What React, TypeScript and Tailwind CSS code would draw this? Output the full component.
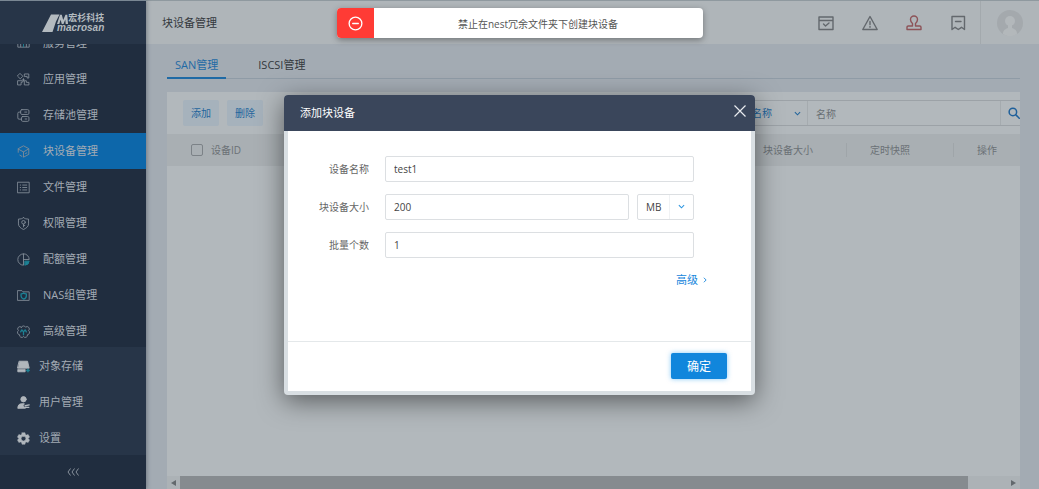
import type { ReactNode } from "react";

type IconProps = { children: ReactNode; className?: string };

function Icon({ children, className = "size-[13px]" }: IconProps) {
  return (
    <svg
      viewBox="0 0 16 16"
      className={className}
      fill="none"
      stroke="currentColor"
      strokeWidth="1.1"
      strokeLinecap="round"
      strokeLinejoin="round"
      aria-hidden="true"
    >
      {children}
    </svg>
  );
}

const teal = "#1c8194";

const menu: { label: string; icon: ReactNode; active?: boolean }[] = [
  {
    label: "服务管理",
    icon: (
      <>
        <path d="M1 3v9.500h14V3M4.500 7v5M11.500 7v5" />
        <path d="M8 6v6" stroke={teal} />
      </>
    ),
  },
  {
    label: "应用管理",
    icon: (
      <>
        <path d="M4 .8 7.200 4 4 7.200.8 4ZM9.500 1.200h5v5h-2v-2h-3Z" />
        <path d="M1.200 9.500h5.300v2H5v3.200H1.200ZM9.500 9.500h2v2h3.200v3.200H9.500Z" />
        <path d="M8 7v3M6.500 8.500H9" />
      </>
    ),
  },
  {
    label: "存储池管理",
    icon: (
      <>
        <path d="M6 .8h7.200a1.500 1.500 0 0 1 1.500 1.500v2.900a1.500 1.500 0 0 1-1.500 1.500H6a1.500 1.500 0 0 1-1.500-1.500V2.300A1.500 1.500 0 0 1 6 .8ZM7 9.300h6.200a1.500 1.500 0 0 1 1.500 1.500v2.900a1.500 1.500 0 0 1-1.500 1.500H7a1.500 1.500 0 0 1-1.500-1.500v-2.900A1.500 1.500 0 0 1 7 9.300Z" />
        <path d="M4.500 3.800h-2A1.500 1.500 0 0 0 1 5.300V11a1.500 1.500 0 0 0 1.500 1.500h3M9.500 3.800H12M10 12.300h2" />
      </>
    ),
  },
  {
    label: "块设备管理",
    active: true,
    icon: (
      <>
        <path d="M1.500 9V4.500L8 1l6.500 3.500v7L8 15V8.500L1.500 5" />
        <path d="m8 8.500 6-3.500M3.500 12.500 6 14M10.500 10.500l1.500-.8" />
      </>
    ),
  },
  {
    label: "文件管理",
    icon: (
      <path d="M1 1.500h14v13H1ZM4 5h.5M4 8h.5M4 11h.5M7 5h5M7 8h5M7 11h5" />
    ),
  },
  {
    label: "权限管理",
    icon: (
      <>
        <path d="M8 .8c1.500 1.300 3.500 1.800 6.200 1.700v6c0 3-2.200 5-6.200 6.900-4-1.900-6.200-3.900-6.200-6.900v-6C4.500 2.600 6.500 2.100 8 .8Z" />
        <circle cx="8" cy="6.500" r="2.200" />
        <path d="M8 8.700v3.500M8 10.500h1.500" />
      </>
    ),
  },
  {
    label: "配额管理",
    icon: (
      <>
        <path d="M8 1a7 7 0 1 0 0 14V1a7 7 0 0 1 7 7H8" />
        <path d="M10 10h5a5.500 5.500 0 0 1-5 5Z" fill={teal} stroke={teal} />
      </>
    ),
  },
  {
    label: "NAS组管理",
    icon: (
      <>
        <path d="M1 2h5l1.500 1.500H15V14H1Z" />
        <path
          d="M5 6c2 0 3-1 3-1s1 1 3.500 1v2.500C11.500 11 9.500 12 8.200 12.500 7 12 5 11 5 8.500Z"
          stroke={teal}
          strokeWidth="1.600"
        />
      </>
    ),
  },
  {
    label: "高级管理",
    icon: (
      <>
        <path d="M5.500 2.700a2.800 2.800 0 0 1 5 0 2.700 2.700 0 0 1 3.700 4.200 2.800 2.800 0 0 1-1.400 5.100 2.700 2.700 0 0 1-4.800 2.200A2.700 2.700 0 0 1 3.200 12a2.800 2.800 0 0 1-1.400-5.100 2.700 2.700 0 0 1 3.700-4.200Z" />
        <path d="M4.500 8.500 6 6l2 2.500L10 6l1.500 2.500M8 8.500v3.500" stroke={teal} strokeWidth="1.600" />
      </>
    ),
  },
];

const sections: { label: string; icon: ReactNode }[] = [
  {
    label: "对象存储",
    icon: (
      <>
        <path d="M3 1.500h10l2 8.500H1Z" fill="currentColor" />
        <path d="M1 12v2.500h9V12Z" fill="currentColor" />
        <path d="M13.500 11.500v3M12 13h3" stroke={teal} strokeWidth="1.800" />
      </>
    ),
  },
  {
    label: "用户管理",
    icon: (
      <>
        <circle cx="8" cy="4" r="3.300" fill="currentColor" />
        <path d="M1 14.800c0-3.800 2-5.300 5-5.300h3l-1.500 2.500 2.500 2.800Z" fill="currentColor" />
        <path d="m10 12 5-1M10.500 14h4" strokeWidth="1.600" />
      </>
    ),
  },
  {
    label: "设置",
    icon: (
      <path
        d="M6.200.8h3.600l.6 2.200 1.100.7 2.200-.7 1.800 3.200L14 7.800v.6l1.500 1.500-1.800 3.100-2.200-.6-1.100.6-.6 2.200H6.200L5.600 13l-1.100-.6-2.200.6L.5 9.900 2 8.400v-.6L.5 6.200 2.300 3l2.200.7L5.600 3ZM8 5.200a2.900 2.900 0 1 0 0 5.800 2.900 2.900 0 0 0 0-5.800Z"
        fill="currentColor"
        fillRule="evenodd"
        strokeWidth=".5"
      />
    ),
  },
];

const actions: { label: string; color: string; icon: ReactNode }[] = [
  {
    label: "任务",
    color: "text-[#63686d]",
    icon: <path d="M1 2h14v12.500H1ZM1 5.500h14M5.500 9l2 2L11 8" />,
  },
  {
    label: "告警",
    color: "text-[#63686d]",
    icon: <path d="M8 1.500 15.200 14.500H.8ZM8 6.500v3M8 11.500v.8" />,
  },
  {
    label: "授权",
    color: "text-[#8d5358]",
    icon: (
      <path d="M6.500 11V8.500C5.300 7.500 4.500 6 4.500 4.500a3.500 3.500 0 0 1 7 0c0 1.500-.8 3-2 4V11M6.500 11H2.300C1.500 11 1 11.500 1 12.300v2.200h14v-2.200c0-.8-.5-1.300-1.300-1.300H9.500" />
    ),
  },
  {
    label: "日志",
    color: "text-[#63686d]",
    icon: <path d="M2 1.500h12.500v13l-3-2.200-3.200 2.200-3.200-2.200L2 14.500ZM5.500 6.500H11" />,
  },
];

function Chevron({ className }: { className: string }) {
  return (
    <svg viewBox="0 0 8 8" fill="none" stroke="currentColor" strokeWidth="1.200" className={className} aria-hidden="true">
      <path d="m1 2.500 3 3 3-3" />
    </svg>
  );
}

function Sidebar() {
  return (
    <aside className="z-10 flex w-[146px] shrink-0 flex-col bg-[#202d3f] text-[11px] text-[#a3abb4] shadow-[1px_0_4px_rgba(40,50,60,0.4)]">
      <div className="z-10 flex h-11 shrink-0 items-center border-t border-[#7a8793] bg-[#273548] pl-[42px] text-[#b3babf]">
        <svg viewBox="0 0 28 18" className="h-[18px] w-7 shrink-0" fill="currentColor" aria-hidden="true">
          <path d="M0 18 9 .5h8.500L14 7.500 10.500 18Z" />
          <path d="M15 10 18 .8h1.800L21.200 6 23.500.8h1.800L26 10h-2.300l-.4-4.500L21.500 10h-1.700L18.600 5.800 17.300 10Z" />
        </svg>
        <div className="-ml-[13px] flex flex-col items-end">
          <span className="text-[9px] leading-[10px] font-bold">宏杉科技</span>
          <span className="font-['Liberation_Sans'] text-[10px] leading-[9px] font-bold italic">macrosan</span>
        </div>
      </div>
      <nav className="min-h-0 flex-1 overflow-hidden">
        <ul className="-mt-[19px]">
          {menu.map((item) => (
            <li key={item.label}>
              <a
                href="#"
                className={`flex h-9 items-center gap-[13px] pt-px pl-[17px] ${item.active ? "bg-[#0d67aa]" : ""}`}
              >
                <span className="text-[#818b97]">
                  <Icon>{item.icon}</Icon>
                </span>
                {item.label}
              </a>
            </li>
          ))}
        </ul>
      </nav>
      <ul className="shrink-0 bg-[#273548]">
        {sections.map((item) => (
          <li key={item.label}>
            <a href="#" className="flex h-9 items-center gap-[9px] pt-0.5 pl-[17px]">
              <span className="text-[#b0b6bc]">
                <Icon>{item.icon}</Icon>
              </span>
              {item.label}
            </a>
          </li>
        ))}
      </ul>
      <button type="button" aria-label="收起" className="flex h-[34px] shrink-0 items-center justify-center text-[#88919b]">
        <svg viewBox="0 0 12 8" className="h-2 w-3" fill="none" stroke="currentColor" strokeWidth="1" aria-hidden="true">
          <path d="M3.500.5 1 4l2.500 3.500M7.500.5 5 4l2.500 3.500M11.500.5 9 4l2.500 3.500" />
        </svg>
      </button>
    </aside>
  );
}

function Header() {
  return (
    <header className="flex h-11 shrink-0 items-center border-t border-[#8f999f] bg-[#afb5b9] pl-4">
      <h1 className="flex-1 pt-0.5 text-[11px] text-[#33383d]">块设备管理</h1>
      <div className="flex h-full items-center gap-7 border-r border-[#a3a9ad] pr-[14px]">
        {actions.map((a) => (
          <button key={a.label} type="button" aria-label={a.label} className={a.color}>
            <Icon className="size-4 [stroke-width:1.400]">{a.icon}</Icon>
          </button>
        ))}
      </div>
      <button type="button" aria-label="账户" className="px-4">
        <svg viewBox="0 0 26 26" className="size-[26px]" aria-hidden="true">
          <circle cx="13" cy="13" r="13" fill="#a4a9ad" />
          <circle cx="13" cy="11" r="5" fill="#b3b8bb" />
          <path d="M6 24c0-3 1-4.500 5-6v-3h4v3c4 1.500 5 3 5 6a13 13 0 0 1-14 0Z" fill="#b3b8bb" />
        </svg>
      </button>
    </header>
  );
}

const toolbarButton = "h-[26px] w-9 rounded-xs bg-[#a6b2bc] pt-px text-[10px] text-[#23659c]";
const dividedCell = "bg-[linear-gradient(#9fa5a9,#9fa5a9)] bg-[length:1px_14px] bg-left bg-no-repeat pl-6 font-normal";

function VolumePanel() {
  return (
    <section className="flex min-h-0 flex-1 flex-col overflow-hidden bg-[#b2b8bc]">
      <div className="flex h-[42px] shrink-0 items-center gap-2 pl-4">
        <button type="button" className={toolbarButton}>添加</button>
        <button type="button" className={toolbarButton}>删除</button>
        <div className="ml-auto flex h-[26px] items-center border-y border-[#9ca2a7] text-[10px]">
          <div className="relative flex h-full items-center border-r border-[#a5abaf]">
            <select aria-label="搜索条件" className="h-full w-[72px] appearance-none pt-px pl-[17px] text-[#23659c]">
              <option>名称</option>
            </select>
            <Chevron className="pointer-events-none absolute right-1.5 size-[7px] text-[#23659c]" />
          </div>
          <input
            aria-label="搜索"
            placeholder="名称"
            className="h-full w-[193px] border-r border-[#a5abaf] pt-px pl-2 placeholder:text-[#696f74]"
          />
          <button type="button" aria-label="查询" className="pl-[7px] text-[#1f609b]">
            <Icon className="size-3 [stroke-width:2]">
              <circle cx="6.500" cy="6.500" r="5" />
              <path d="m10.500 10.500 4.500 4.500" />
            </Icon>
          </button>
        </div>
      </div>
      <table className="w-full table-fixed text-left text-[10px] text-[#6b7176]">
        <thead className="bg-[#a9afb3]">
          <tr className="h-8">
            <th className="pl-6 font-normal">
              <label className="flex items-center gap-2">
                <input type="checkbox" className="size-3 appearance-none rounded-xs border border-[#7c8287]" />
                设备ID
              </label>
            </th>
            <th className="w-[107px] pl-6 font-normal">块设备大小</th>
            <th className={`w-[107px] ${dividedCell}`}>定时快照</th>
            <th className={`w-[67px] ${dividedCell}`}>操作</th>
          </tr>
        </thead>
      </table>
      <div className="mt-auto flex h-[13px] items-center bg-[#acb2b6] text-[#63696d]">
        <svg viewBox="0 0 13 13" className="size-[13px] shrink-0" fill="currentColor" aria-hidden="true">
          <path d="M9 4v6L4 7Z" />
        </svg>
        <div className="mr-[39px] h-full flex-1 bg-[#868b8f]" />
        <svg viewBox="0 0 13 13" className="size-[13px] shrink-0" fill="currentColor" aria-hidden="true">
          <path d="M4 4v6l5-3Z" />
        </svg>
      </div>
    </section>
  );
}

const field = "h-[26px] min-w-0 rounded-xs border border-[#dcdfe2] bg-white text-[10px] text-[#444]";

function CreateDialog() {
  return (
    <div className="absolute inset-0 z-20 grid place-items-center">
      <form
        role="dialog"
        aria-labelledby="dialog-title"
        className="flex w-[471px] flex-col rounded-sm bg-[#d9dfe3] shadow-[0_6px_26px_rgba(0,0,0,0.5)]"
      >
        <div className="flex h-9 items-center justify-between rounded-t-sm bg-[#3a465b] pr-[9px] pl-4 text-white">
          <h2 id="dialog-title" className="pt-0.5 text-[11px]">添加块设备</h2>
          <button type="button" aria-label="关闭" className="pb-1">
            <svg viewBox="0 0 12 12" className="size-3" fill="none" stroke="#e8ebef" strokeWidth="1.200" aria-hidden="true">
              <path d="m.5.5 11 11M11.500.5l-11 11" />
            </svg>
          </button>
        </div>
        <div className="mx-1 mb-1 bg-white">
          <div className="flex h-[210px] flex-col px-[57px] pt-[25px]">
            <div className="-ml-10 grid grid-cols-[64px_1fr] items-center gap-x-4 gap-y-3 text-right text-[10px] text-[#666]">
              <label htmlFor="name" className="pt-0.5">设备名称</label>
              <input id="name" defaultValue="test1" className={`${field} px-2`} />
              <label htmlFor="size" className="pt-0.5">块设备大小</label>
              <div className="flex gap-2">
                <input id="size" defaultValue="200" className={`${field} flex-1 px-2`} />
                <div className="relative flex w-[57px] items-center">
                  <select aria-label="单位" className={`${field} w-full appearance-none pt-0.5 pl-2`}>
                    <option>MB</option>
                  </select>
                  <span className="pointer-events-none absolute inset-y-px right-px flex w-6 items-center justify-center border-l border-[#f0f2f4]">
                    <Chevron className="size-[7px] text-[#2b95e0]" />
                  </span>
                </div>
              </div>
              <label htmlFor="count" className="pt-0.5">批量个数</label>
              <input id="count" defaultValue="1" className={`${field} px-2`} />
            </div>
            <button type="button" className="mt-[14px] -mr-[14px] flex items-center gap-1 self-end text-[11px] leading-4 text-[#1686dc]">
              高级
              <Chevron className="size-1.5 -rotate-90" />
            </button>
          </div>
          <div className="flex h-[50px] items-center justify-end border-t border-[#e4e8ea] pr-6">
            <button
              type="submit"
              className="h-[26px] w-14 rounded-xs bg-[#1186dc] pt-px text-[12px] text-white shadow-[0_0_5px_rgba(17,150,240,0.5)]"
            >
              确定
            </button>
          </div>
        </div>
      </form>
    </div>
  );
}

function Toast() {
  return (
    <div
      role="alert"
      className="absolute top-2 left-1/2 z-30 flex h-[30px] w-[366px] -translate-x-1/2 overflow-hidden rounded-sm bg-white shadow-[0_2px_6px_rgba(0,0,0,0.35)]"
    >
      <span className="flex w-[37px] items-center justify-center bg-[#ff3b35] text-white">
        <Icon className="size-[15px] [stroke-width:1.400]">
          <circle cx="8" cy="8" r="6.800" />
          <path d="M5 8h6" />
        </Icon>
      </span>
      <p className="flex-1 text-center text-[10px] leading-8 text-[#555]">禁止在nest冗余文件夹下创建块设备</p>
    </div>
  );
}

export default function App() {
  return (
    <div className="relative flex h-screen overflow-hidden bg-[#a3abb3] font-['Open_Sans','Noto_Sans_CJK_SC',sans-serif]">
      <Sidebar />
      <div className="flex min-w-0 flex-1 flex-col">
        <Header />
        <main className="flex min-h-0 flex-1 flex-col pr-[19px] pl-[21px]">
          <nav className="mb-[13px] flex h-[35px] shrink-0 gap-6 border-b border-[#8f9ba6] pt-1.5 text-[11px] text-[#33383d]">
            <a href="#" className="h-[29px] border-b-2 border-[#1f6aa5] px-2 leading-[30px] text-[#1f6aa5]">SAN管理</a>
            <a href="#" className="px-2 leading-[30px]">ISCSI管理</a>
          </nav>
          <VolumePanel />
        </main>
      </div>
      <CreateDialog />
      <Toast />
    </div>
  );
}
